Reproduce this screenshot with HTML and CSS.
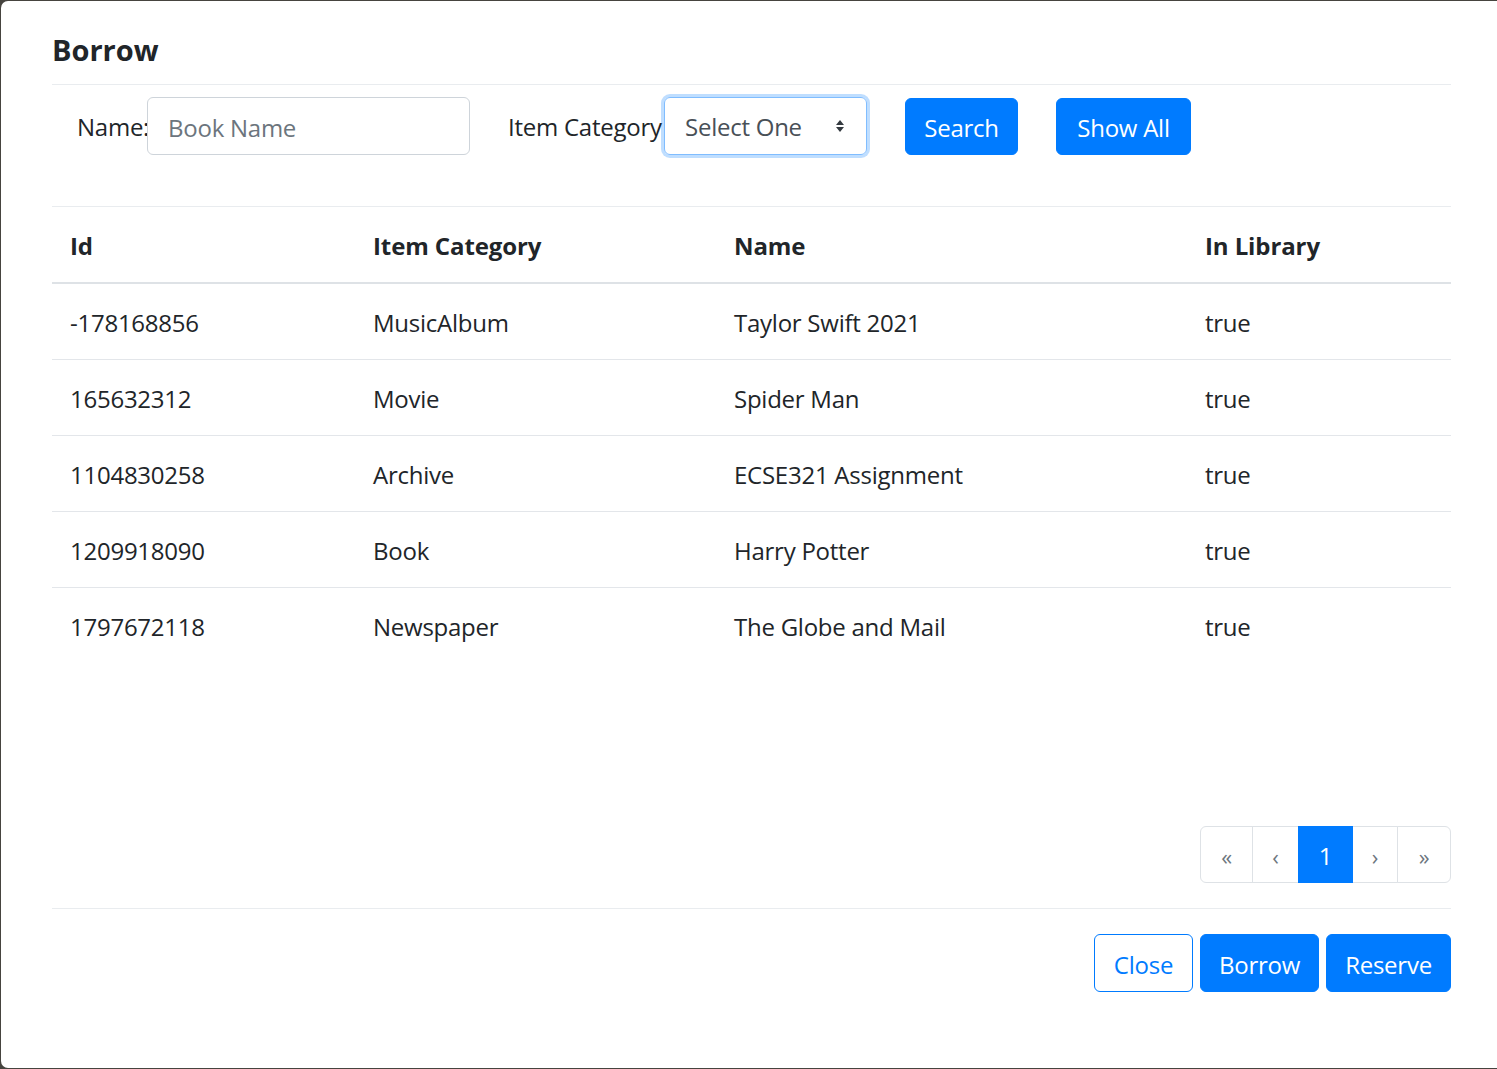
FILE: index.html
```html
<!DOCTYPE html>
<html lang="en">
<head>
<meta charset="utf-8">
<title>Borrow</title>
<link rel="stylesheet" href="styles.css">
</head>
<body>
<div class="modal">
  <div class="modal-header">
    <h5 class="modal-title">Borrow</h5>
  </div>
  <div class="modal-body">
    <form class="filters">
      <label class="lbl lbl-name" for="bname">Name:</label>
      <input id="bname" class="field" type="text" placeholder="Book Name">
      <label class="lbl lbl-cat">Item Category</label>
      <div class="select">
        <span>Select One</span>
        <svg class="caret" width="10" height="16" viewBox="0 0 10 16"><path d="M5 2 L9 7 H1 Z M5 14 L1 9 H9 Z" fill="#343a40"/></svg>
      </div>
      <button type="button" class="btn btn-primary btn-search">Search</button>
      <button type="button" class="btn btn-primary btn-all">Show All</button>
    </form>

    <table class="table">
      <colgroup>
        <col class="c-id"><col class="c-cat"><col class="c-name"><col class="c-lib">
      </colgroup>
      <thead>
        <tr><th>Id</th><th>Item Category</th><th>Name</th><th>In Library</th></tr>
      </thead>
      <tbody>
        <tr><td>-178168856</td><td>MusicAlbum</td><td>Taylor Swift 2021</td><td>true</td></tr>
        <tr><td>165632312</td><td>Movie</td><td>Spider Man</td><td>true</td></tr>
        <tr><td>1104830258</td><td>Archive</td><td>ECSE321 Assignment</td><td>true</td></tr>
        <tr><td>1209918090</td><td>Book</td><td>Harry Potter</td><td>true</td></tr>
        <tr><td>1797672118</td><td>Newspaper</td><td>The Globe and Mail</td><td>true</td></tr>
      </tbody>
    </table>

    <nav class="pager">
      <ul class="pagination">
        <li class="page-item p1"><span class="page-link">«</span></li>
        <li class="page-item p2"><span class="page-link">‹</span></li>
        <li class="page-item p3 active"><span class="page-link">1</span></li>
        <li class="page-item p4"><span class="page-link">›</span></li>
        <li class="page-item p5"><span class="page-link">»</span></li>
      </ul>
    </nav>
  </div>
  <div class="modal-footer">
    <button type="button" class="btn btn-outline btn-close">Close</button>
    <button type="button" class="btn btn-primary btn-borrow">Borrow</button>
    <button type="button" class="btn btn-primary btn-reserve">Reserve</button>
  </div>
</div>
</body>
</html>
```

FILE: styles.css
```css
* { box-sizing: border-box; }

html, body {
  margin: 0;
  padding: 0;
  height: 100%;
  overflow: hidden;
}

body {
  background: #46443f;
  font-family: "Open Sans", "Noto Sans", "Liberation Sans", sans-serif;
  font-size: 24px;
  line-height: 36px;
  letter-spacing: -0.25px;
  color: #212529;
}

.modal {
  margin: 1px -12px 0 1px;
  height: 1067px;
  background: #fff;
  border-radius: 7px 0 0 7px;
  padding: 0 58px 0 51px;
  display: flex;
  flex-direction: column;
}

.modal-header {
  padding: 31px 0 16px;
  border-bottom: 1px solid #e9ecef;
}

.modal-title {
  margin: 0;
  font-size: 29px;
  line-height: 36px;
  font-weight: 700;
  letter-spacing: 0;
}

.modal-body {
  display: flex;
  flex-direction: column;
}

.filters {
  display: flex;
  align-items: center;
  height: 58px;
  margin: 12px 0 0;
}

.lbl {
  white-space: nowrap;
  padding-top: 2px;
}

.lbl-name {
  margin-left: 25px;
  width: 70px;
}

.lbl-cat {
  margin-left: 38px;
  width: 156px;
}

.field {
  width: 323px;
  height: 58px;
  border: 1px solid #ced4da;
  border-radius: 6px;
  padding: 2px 20px 0;
  font: inherit;
  letter-spacing: inherit;
  color: #495057;
  background: #fff;
}

.field::placeholder { color: #6c757d; }

.select {
  width: 203px;
  height: 58px;
  border: 1px solid #80bdff;
  border-radius: 6px;
  box-shadow: 0 0 0 3px rgba(0, 123, 255, 0.25);
  padding: 2px 20px 0;
  display: flex;
  align-items: center;
  justify-content: space-between;
  color: #495057;
}

.caret { margin: -2px 1px 0 0; }

.btn {
  height: 57px;
  border-radius: 6px;
  border: 1px solid #007bff;
  font: inherit;
  letter-spacing: inherit;
  display: flex;
  align-items: center;
  justify-content: center;
  padding: 3px 0 0;
}

.btn-primary {
  background: #007bff;
  color: #fff;
}

.btn-outline {
  background: #fff;
  color: #007bff;
}

.btn-search { margin-left: 38px; width: 113px; }
.btn-all { margin-left: 38px; width: 135px; }

.table {
  margin-top: 51px;
  width: 100%;
  border-collapse: collapse;
  table-layout: fixed;
}

.c-id { width: 303px; }
.c-cat { width: 361px; }
.c-name { width: 471px; }

.table th,
.table td {
  text-align: left;
  padding: 21px 18px 18px;
  line-height: 36px;
  vertical-align: top;
}

.table th {
  font-weight: 700;
  letter-spacing: -0.1px;
  border-top: 1px solid #e9ecef;
  border-bottom: 2px solid #dee2e6;
}

.table td {
  border-top: 1px solid #e3e6ea;
}

.pager {
  margin-top: 163px;
  display: flex;
  justify-content: flex-end;
  padding-bottom: 25px;
  border-bottom: 1px solid #e9ecef;
}

.pagination {
  display: flex;
  list-style: none;
  margin: 0;
  padding: 0;
}

.page-link {
  display: flex;
  align-items: center;
  justify-content: center;
  height: 57px;
  border: 1px solid #dee2e6;
  margin-left: -1px;
  color: #6c757d;
  background: #fff;
  font-size: 22px;
  padding-top: 2px;
}

.p1 .page-link { width: 53px; margin-left: 0; border-radius: 6px 0 0 6px; }
.p2 .page-link { width: 47px; }
.p3 .page-link { width: 55px; }
.p4 .page-link { width: 46px; }
.p5 .page-link { width: 54px; border-radius: 0 6px 6px 0; }

.active .page-link {
  background: #007bff;
  border-color: #007bff;
  color: #fff;
  font-size: 24px;
  position: relative;
  z-index: 1;
}

.modal-footer {
  display: flex;
  justify-content: flex-end;
  gap: 7px;
  padding-top: 25px;
}

.modal-footer .btn { height: 58px; }
.btn-close { width: 99px; }
.btn-borrow { width: 119px; }
.btn-reserve { width: 125px; }
```
